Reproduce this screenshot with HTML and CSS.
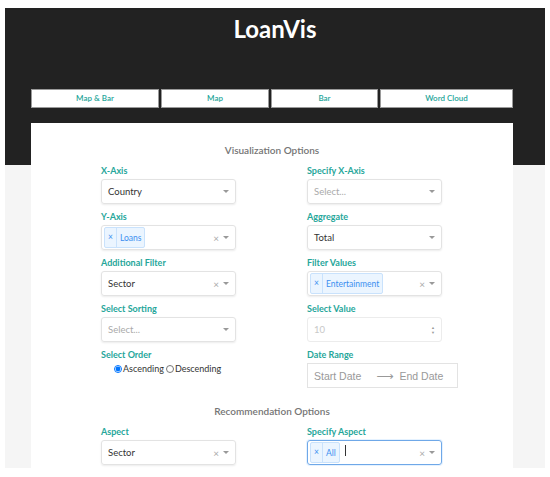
FILE: index.html
```html
<!DOCTYPE html>
<html lang="en">
<head>
    <meta charset="UTF-8">
    <title>LoanVis</title>
    <link rel="stylesheet" href="styles.css">
</head>
<body>
    <div class="page">
        <header class="top">
            <h1>LoanVis</h1>
            <nav class="tabs">
                <a class="tab tab-1">Map &amp; Bar</a>
                <a class="tab tab-2">Map</a>
                <a class="tab tab-3">Bar</a>
                <a class="tab tab-4">Word Cloud</a>
            </nav>
        </header>

        <section class="card">
            <h2>Visualization Options</h2>
            <div class="grid">
                <div class="field">
                    <label>X-Axis</label>
                    <div class="select">
                        <span class="value">Country</span>
                        <span class="arrow"></span>
                    </div>
                </div>
                <div class="field">
                    <label>Specify X-Axis</label>
                    <div class="select">
                        <span class="value placeholder">Select...</span>
                        <span class="arrow"></span>
                    </div>
                </div>

                <div class="field">
                    <label>Y-Axis</label>
                    <div class="select">
                        <span class="chip"><span class="chip-x">×</span><span class="chip-label">Loans</span></span>
                        <span class="clear">×</span>
                        <span class="arrow"></span>
                    </div>
                </div>
                <div class="field">
                    <label>Aggregate</label>
                    <div class="select">
                        <span class="value">Total</span>
                        <span class="arrow"></span>
                    </div>
                </div>

                <div class="field">
                    <label>Additional Filter</label>
                    <div class="select">
                        <span class="value">Sector</span>
                        <span class="clear">×</span>
                        <span class="arrow"></span>
                    </div>
                </div>
                <div class="field">
                    <label>Filter Values</label>
                    <div class="select">
                        <span class="chip"><span class="chip-x">×</span><span class="chip-label">Entertainment</span></span>
                        <span class="clear">×</span>
                        <span class="arrow"></span>
                    </div>
                </div>

                <div class="field">
                    <label>Select Sorting</label>
                    <div class="select">
                        <span class="value placeholder">Select...</span>
                        <span class="arrow"></span>
                    </div>
                </div>
                <div class="field">
                    <label>Select Value</label>
                    <div class="select number">
                        <span class="value disabled">10</span>
                        <span class="spin"><span>▲</span><span>▼</span></span>
                    </div>
                </div>

                <div class="field">
                    <label>Select Order</label>
                    <div class="radios">
                        <label class="radio"><input type="radio" name="order" checked> Ascending</label>
                        <label class="radio"><input type="radio" name="order"> Descending</label>
                    </div>
                </div>
                <div class="field">
                    <label>Date Range</label>
                    <div class="dates">
                        <span>Start Date</span>
                        <span class="to">⟶</span>
                        <span>End Date</span>
                    </div>
                </div>
            </div>

            <h2 class="second">Recommendation Options</h2>
            <div class="grid">
                <div class="field">
                    <label>Aspect</label>
                    <div class="select">
                        <span class="value">Sector</span>
                        <span class="clear">×</span>
                        <span class="arrow"></span>
                    </div>
                </div>
                <div class="field">
                    <label>Specify Aspect</label>
                    <div class="select focused">
                        <span class="chip"><span class="chip-x">×</span><span class="chip-label">All</span></span>
                        <span class="caret"></span>
                        <span class="clear">×</span>
                        <span class="arrow"></span>
                    </div>
                </div>
            </div>
        </section>
    </div>
</body>
</html>
```

FILE: styles.css
```css
* {
    margin: 0;
    padding: 0;
    box-sizing: border-box;
}

body {
    background: #fff;
    font-family: 'Lato', 'Liberation Sans', sans-serif;
    padding: 8px 5px 0 5px;
}

.page {
    background: #f5f5f5;
    height: 460px;
    overflow: hidden;
}

.top {
    background: #222;
    height: 157px;
    padding-top: 6px;
}

.top h1 {
    color: #fff;
    text-align: center;
    font-size: 24px;
    font-weight: 700;
    line-height: 30px;
}

.tabs {
    display: flex;
    gap: 2px;
    margin: 45px 0 0 26px;
    width: 482px;
}

.tab {
    background: #fff;
    border: 1px solid #9a9a9a;
    color: #26a69a;
    font-size: 8px;
    font-weight: 600;
    height: 19px;
    line-height: 17px;
    text-align: center;
}

.tab-1 { width: 128px; }
.tab-2 { width: 108px; }
.tab-3 { width: 107px; }
.tab-4 { width: 133px; }

.card {
    background: #fff;
    margin: -42px 0 0 26px;
    width: 482px;
    height: 400px;
    padding-top: 20px;
}

.card h2 {
    text-align: center;
    color: #757575;
    font-size: 10px;
    font-weight: 600;
    line-height: 14px;
    margin-bottom: 8px;
}

.card h2.second {
    margin-top: 9px;
    margin-bottom: 8px;
}

.grid {
    display: grid;
    grid-template-columns: 206px 206px;
    padding-left: 70px;
}

.field {
    height: 46px;
}

.field > label {
    display: block;
    color: #26a69a;
    font-size: 9px;
    font-weight: 700;
    line-height: 12px;
    margin-bottom: 2px;
}

.select {
    width: 135px;
    height: 25px;
    border: 1px solid #e3e3e3;
    border-radius: 3px;
    box-shadow: 0 1px 2px rgba(0, 0, 0, 0.08);
    display: flex;
    align-items: center;
    padding: 0 6px 0 6px;
    font-size: 9.5px;
    color: #333;
}

.select.focused {
    border-color: #6fa8e8;
    box-shadow: 0 0 0 1px rgba(0, 126, 255, 0.1);
}

.value {
    flex: 1;
}

.placeholder {
    color: #aaa;
}

.disabled {
    color: #c8c8c8;
}

.select.number {
    border-color: #ececec;
    box-shadow: none;
}

.spin {
    display: flex;
    flex-direction: column;
    font-size: 4px;
    line-height: 5px;
    color: #999;
}

.arrow {
    width: 0;
    height: 0;
    border-left: 3px solid transparent;
    border-right: 3px solid transparent;
    border-top: 3px solid #999;
    margin-left: 4px;
}

.clear {
    color: #aaa;
    font-size: 10px;
    line-height: 10px;
    margin-left: auto;
}

.chip {
    display: flex;
    align-items: center;
    height: 21px;
    background: #ebf5ff;
    border: 1px solid #c9e2fc;
    border-radius: 2px;
    color: #3b8ff0;
    font-size: 8.5px;
    margin-left: -4px;
}

.chip-x {
    padding: 0 3px 0 3px;
    border-right: 1px solid #c9e2fc;
    line-height: 19px;
}

.chip-label {
    padding: 0 3px 0 3px;
}

.caret {
    width: 1px;
    height: 11px;
    background: #333;
    margin: -4px 0 0 5px;
    align-self: center;
}

.radios {
    display: flex;
    gap: 2px;
    padding-left: 13px;
    margin-top: 1px;
}

.radio {
    display: flex;
    align-items: center;
    gap: 1px;
    font-size: 9px;
    color: #333;
}

.radio input {
    width: 8px;
    height: 8px;
    margin: 0;
}

.dates {
    width: 151px;
    height: 25px;
    border: 1px solid #e3e3e3;
    display: flex;
    align-items: center;
    padding-left: 6px;
    font-family: 'Liberation Sans', Arial, sans-serif;
    font-size: 10.5px;
    color: #999;
}

.dates .to {
    font-family: 'DejaVu Sans', sans-serif;
    margin: 0 6px 0 15px;
    font-size: 12px;
}
```
